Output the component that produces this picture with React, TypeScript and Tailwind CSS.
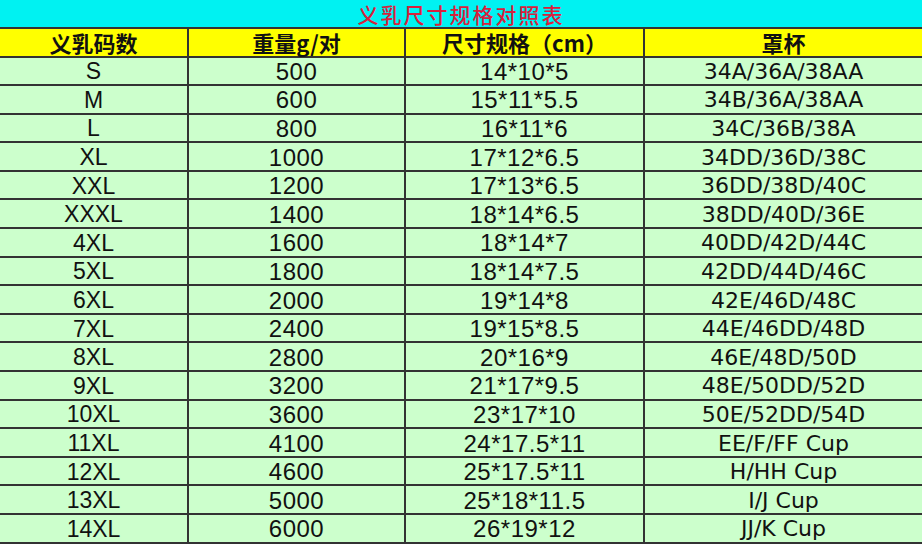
import React from "react";

type Row = { code: string; weight: string; size: string; cup: string };

const ROWS: Row[] = [
  { code: "S", weight: "500", size: "14*10*5", cup: "34A/36A/38AA" },
  { code: "M", weight: "600", size: "15*11*5.5", cup: "34B/36A/38AA" },
  { code: "L", weight: "800", size: "16*11*6", cup: "34C/36B/38A" },
  { code: "XL", weight: "1000", size: "17*12*6.5", cup: "34DD/36D/38C" },
  { code: "XXL", weight: "1200", size: "17*13*6.5", cup: "36DD/38D/40C" },
  { code: "XXXL", weight: "1400", size: "18*14*6.5", cup: "38DD/40D/36E" },
  { code: "4XL", weight: "1600", size: "18*14*7", cup: "40DD/42D/44C" },
  { code: "5XL", weight: "1800", size: "18*14*7.5", cup: "42DD/44D/46C" },
  { code: "6XL", weight: "2000", size: "19*14*8", cup: "42E/46D/48C" },
  { code: "7XL", weight: "2400", size: "19*15*8.5", cup: "44E/46DD/48D" },
  { code: "8XL", weight: "2800", size: "20*16*9", cup: "46E/48D/50D" },
  { code: "9XL", weight: "3200", size: "21*17*9.5", cup: "48E/50DD/52D" },
  { code: "10XL", weight: "3600", size: "23*17*10", cup: "50E/52DD/54D" },
  { code: "11XL", weight: "4100", size: "24*17.5*11", cup: "EE/F/FF Cup" },
  { code: "12XL", weight: "4600", size: "25*17.5*11", cup: "H/HH Cup" },
  { code: "13XL", weight: "5000", size: "25*18*11.5", cup: "I/J Cup" },
  { code: "14XL", weight: "6000", size: "26*19*12", cup: "JJ/K Cup" },
];

const cjk = "font-['Noto_Sans_CJK_SC',sans-serif]";
const cols = "grid grid-cols-[189px_217px_239px_277px]";
const cell = "flex items-center justify-center border-r-2 border-[#333] leading-none last:border-r-0";

export default function App() {
  return (
    <div className="h-[547px] w-[922px] overflow-hidden bg-white text-[#111]">
      <div
        className={`flex h-[29px] items-center justify-center border-b-2 border-[#333] bg-[#00f2f2] pt-[1px] ${cjk} text-[21px] font-medium leading-none tracking-[2px] text-[#d8203c]`}
      >
        义乳尺寸规格对照表
      </div>
      <div className={`${cols} h-[28.5px] border-b-2 border-[#333] bg-[#ffff00] ${cjk} text-[22px] font-bold`}>
        <div className={cell}>义乳码数</div>
        <div className={cell}>重量g/对</div>
        <div className={cell}>尺寸规格（cm）</div>
        <div className={cell}>罩杯</div>
      </div>
      {ROWS.map((r) => (
        <div key={r.code} className={`${cols} h-[28.6px] border-b-2 border-[#333] bg-[#ccffcc]`}>
          <div className={`${cell} pt-[2px] font-['Liberation_Sans',Arial,sans-serif] text-[23px]`}>
            {r.code}
          </div>
          <div className={`${cell} pt-[2px] font-['Liberation_Sans',Arial,sans-serif] text-[24px] tracking-[0.5px]`}>
            {r.weight}
          </div>
          <div className={`${cell} pt-[2px] font-['Liberation_Sans',Arial,sans-serif] text-[24px] tracking-[0.5px]`}>
            {r.size}
          </div>
          <div className={`${cell} pt-[2px] font-['DejaVu_Sans',Verdana,sans-serif] text-[22px]`}>
            {r.cup}
          </div>
        </div>
      ))}
    </div>
  );
}
